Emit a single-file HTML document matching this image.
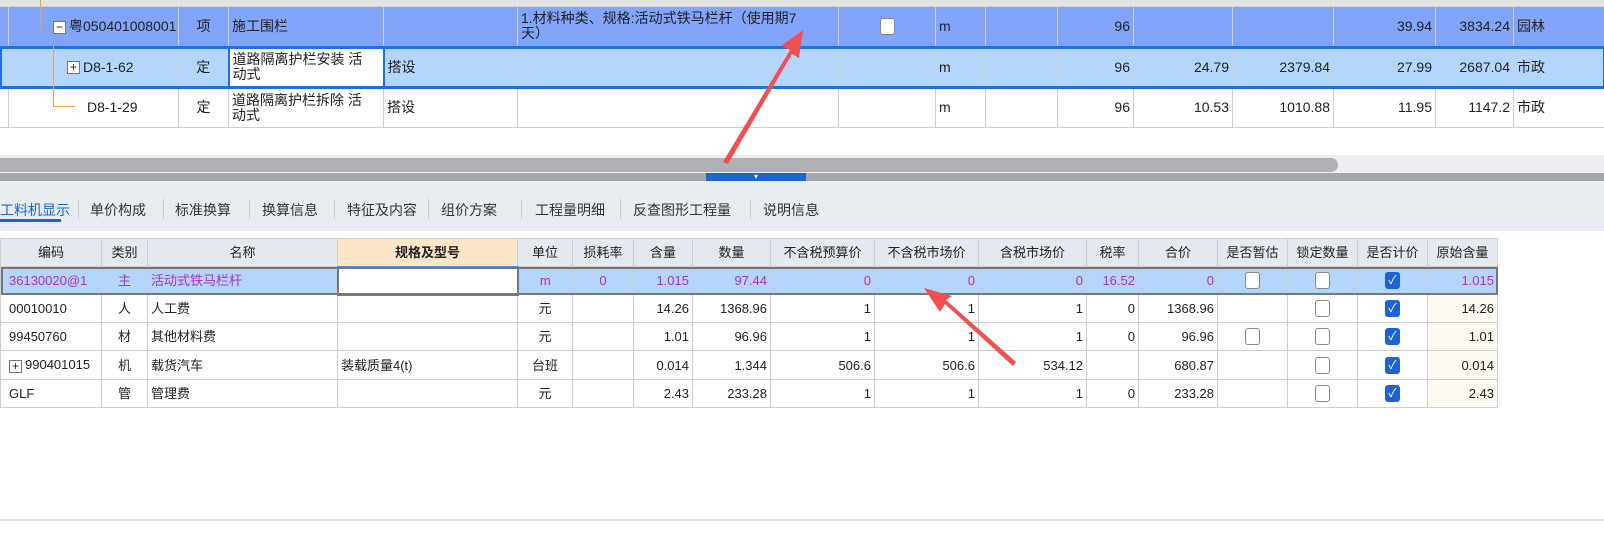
<!DOCTYPE html>
<html><head><meta charset="utf-8"><style>
*{margin:0;padding:0;box-sizing:border-box}
body{width:1604px;height:535px;overflow:hidden;background:#fff;position:relative;font-family:"Liberation Sans","Noto Sans CJK SC",sans-serif;font-size:13px;color:#222}
table{border-collapse:collapse;table-layout:fixed;position:absolute}
td{border:1px solid #cfcfcf;padding:0 3px;overflow:hidden;white-space:nowrap;line-height:15px}
.top td{font-size:14px}
.r{text-align:right}.c{text-align:center}
.w{white-space:normal}
.cb{display:inline-block;width:15px;height:17px;border:1px solid #888;border-radius:3px;background:#fff;vertical-align:middle}
.ck{display:inline-block;width:15px;height:17px;border-radius:3px;background:#1d63d6;color:#fff;font-size:12px;line-height:17px;text-align:center;vertical-align:middle}
.pm{display:inline-block;width:13px;height:13px;border:1px solid #777;background:#fff;font-size:12px;line-height:10px;text-align:center;vertical-align:middle;margin-right:3px}
.tabs{position:absolute;left:0;top:181px;width:1604px;height:50px;background:#e9edf2}
.tab{position:absolute;top:19px;font-size:14px;color:#333}
.sep{position:absolute;top:18px;width:1px;height:20px;background:#c8ccd2}
.mag td{color:#b030c8}
.bt td{font-size:13px}
</style></head><body>
<div style="position:absolute;left:0;top:0;width:1604px;height:6px;background:#e3e3e3"></div>
<table class="top" style="left:-1px;top:6px;width:1605px">
<colgroup><col style="width:9px"><col style="width:170px"><col style="width:50px"><col style="width:155px"><col style="width:134px"><col style="width:321px"><col style="width:97px"><col style="width:50px"><col style="width:72px"><col style="width:76px"><col style="width:99px"><col style="width:101px"><col style="width:102px"><col style="width:78px"><col style="width:91px"></colgroup>
<tr style="height:40px;background:#80a5fb"><td></td><td style="padding-left:44px"><span class="pm">−</span>粤050401008001</td><td class="c">项</td><td>施工围栏</td><td></td><td class="w" style="vertical-align:top;padding-top:4px">1.材料种类、规格:活动式铁马栏杆（使用期7<br>天）</td><td class="c"><span class="cb"></span></td><td>m</td><td></td><td class="r">96</td><td></td><td></td><td class="r">39.94</td><td class="r">3834.24</td><td>园林</td></tr>
<tr style="height:41px;background:#b4d6fd;outline:3px solid #1f6fe8;outline-offset:-2px"><td></td><td style="padding-left:58px"><span class="pm">+</span>D8-1-62</td><td class="c">定</td><td class="w" style="background:#fff;border:2px solid #1f6fe8">道路隔离护栏安装 活<br>动式</td><td>搭设</td><td></td><td></td><td>m</td><td></td><td class="r">96</td><td class="r">24.79</td><td class="r">2379.84</td><td class="r">27.99</td><td class="r">2687.04</td><td>市政</td></tr>
<tr style="height:40px"><td></td><td style="padding-left:78px">D8-1-29</td><td class="c">定</td><td class="w">道路隔离护栏拆除 活<br>动式</td><td>搭设</td><td></td><td></td><td>m</td><td></td><td class="r">96</td><td class="r">10.53</td><td class="r">1010.88</td><td class="r">11.95</td><td class="r">1147.2</td><td>市政</td></tr>
</table>
<div style="position:absolute;left:40px;top:0;width:1px;height:30px;background:#f5a040"></div>
<div style="position:absolute;left:53px;top:46px;width:1px;height:61px;background:#f5a040"></div>
<div style="position:absolute;left:53px;top:106px;width:22px;height:1px;background:#f5a040"></div>
<div style="position:absolute;left:0;top:155px;width:1604px;height:18px;background:#eceef0"></div>
<div style="position:absolute;left:0;top:158px;width:1338px;height:14px;background:#aeb0b4;border-radius:0 7px 7px 0"></div>
<div style="position:absolute;left:0;top:173px;width:1604px;height:8px;background:#a6a8ac"></div>
<div style="position:absolute;left:706px;top:173px;width:100px;height:8px;background:#1b64d2;color:#fff;font-size:8px;line-height:8px;text-align:center">▾</div>
<div class="tabs">
<span class="tab" style="left:0;color:#1b64d2">工料机显示</span><div style="position:absolute;left:0;top:38px;width:61px;height:3px;background:#1b64d2"></div>
<div class="sep" style="left:78px"></div><span class="tab" style="left:90px">单价构成</span>
<div class="sep" style="left:163px"></div><span class="tab" style="left:175px">标准换算</span>
<div class="sep" style="left:249px"></div><span class="tab" style="left:262px">换算信息</span>
<div class="sep" style="left:334px"></div><span class="tab" style="left:347px">特征及内容</span>
<div class="sep" style="left:428px"></div><span class="tab" style="left:441px">组价方案</span>
<div class="sep" style="left:521px"></div><span class="tab" style="left:535px">工程量明细</span>
<div class="sep" style="left:620px"></div><span class="tab" style="left:633px">反查图形工程量</span>
<div class="sep" style="left:750px"></div><span class="tab" style="left:763px">说明信息</span>
</div>
<table class="bt" style="left:0;top:238px;width:1497px">
<colgroup><col style="width:101px"><col style="width:46px"><col style="width:190px"><col style="width:180px"><col style="width:55px"><col style="width:61px"><col style="width:59px"><col style="width:78px"><col style="width:104px"><col style="width:104px"><col style="width:108px"><col style="width:52px"><col style="width:79px"><col style="width:70px"><col style="width:70px"><col style="width:70px"><col style="width:70px"></colgroup>
<tr style="height:28px;background:#e4e9f0"><td class="c">编码</td><td class="c">类别</td><td class="c">名称</td><td class="c" style="background:#fde5c8;font-weight:bold;border-bottom:2px solid #4a90e2">规格及型号</td><td class="c">单位</td><td class="c">损耗率</td><td class="c">含量</td><td class="c">数量</td><td class="c">不含税预算价</td><td class="c">不含税市场价</td><td class="c">含税市场价</td><td class="c">税率</td><td class="c">合价</td><td class="c">是否暂估</td><td class="c">锁定数量</td><td class="c">是否计价</td><td class="c">原始含量</td></tr>
<tr style="height:28px;background:#b4d6fd;outline:2px solid #777;outline-offset:-2px" class="mag"><td style="padding-left:8px">36130020@1</td><td class="c">主</td><td>活动式铁马栏杆</td><td style="background:#fff;border:2px solid #777"></td><td class="c">m</td><td class="c">0</td><td class="r">1.015</td><td class="r">97.44</td><td class="r">0</td><td class="r">0</td><td class="r">0</td><td class="r">16.52</td><td class="r">0</td><td class="c"><span class="cb"></span></td><td class="c"><span class="cb"></span></td><td class="c"><span class="ck">✓</span></td><td class="r">1.015</td></tr>
<tr style="height:28px"><td style="padding-left:8px">00010010</td><td class="c">人</td><td>人工费</td><td></td><td class="c">元</td><td></td><td class="r">14.26</td><td class="r">1368.96</td><td class="r">1</td><td class="r">1</td><td class="r">1</td><td class="r">0</td><td class="r">1368.96</td><td></td><td class="c"><span class="cb"></span></td><td class="c"><span class="ck">✓</span></td><td class="r" style="background:#fdf9f3">14.26</td></tr>
<tr style="height:28px"><td style="padding-left:8px">99450760</td><td class="c">材</td><td>其他材料费</td><td></td><td class="c">元</td><td></td><td class="r">1.01</td><td class="r">96.96</td><td class="r">1</td><td class="r">1</td><td class="r">1</td><td class="r">0</td><td class="r">96.96</td><td class="c"><span class="cb"></span></td><td class="c"><span class="cb"></span></td><td class="c"><span class="ck">✓</span></td><td class="r" style="background:#fdf9f3">1.01</td></tr>
<tr style="height:29px"><td style="padding-left:8px"><span class="pm">+</span>990401015</td><td class="c">机</td><td>载货汽车</td><td>装载质量4(t)</td><td class="c">台班</td><td></td><td class="r">0.014</td><td class="r">1.344</td><td class="r">506.6</td><td class="r">506.6</td><td class="r">534.12</td><td></td><td class="r">680.87</td><td></td><td class="c"><span class="cb"></span></td><td class="c"><span class="ck">✓</span></td><td class="r" style="background:#fdf9f3">0.014</td></tr>
<tr style="height:28px"><td style="padding-left:8px">GLF</td><td class="c">管</td><td>管理费</td><td></td><td class="c">元</td><td></td><td class="r">2.43</td><td class="r">233.28</td><td class="r">1</td><td class="r">1</td><td class="r">1</td><td class="r">0</td><td class="r">233.28</td><td></td><td class="c"><span class="cb"></span></td><td class="c"><span class="ck">✓</span></td><td class="r" style="background:#fdf9f3">2.43</td></tr>
</table>
<div style="position:absolute;left:0;top:519px;width:1604px;height:2px;background:#dde1e6"></div>
<svg style="position:absolute;left:0;top:0" width="1604" height="535">
<polygon points="723,162 790,50 781,46 803,30 799,58 792,54 728,164" fill="#f05050"/>
<polygon points="1013,366 945,304 940,312 924,288 952,296 946,300 1016,362" fill="#f05050"/>
</svg>
</body></html>
